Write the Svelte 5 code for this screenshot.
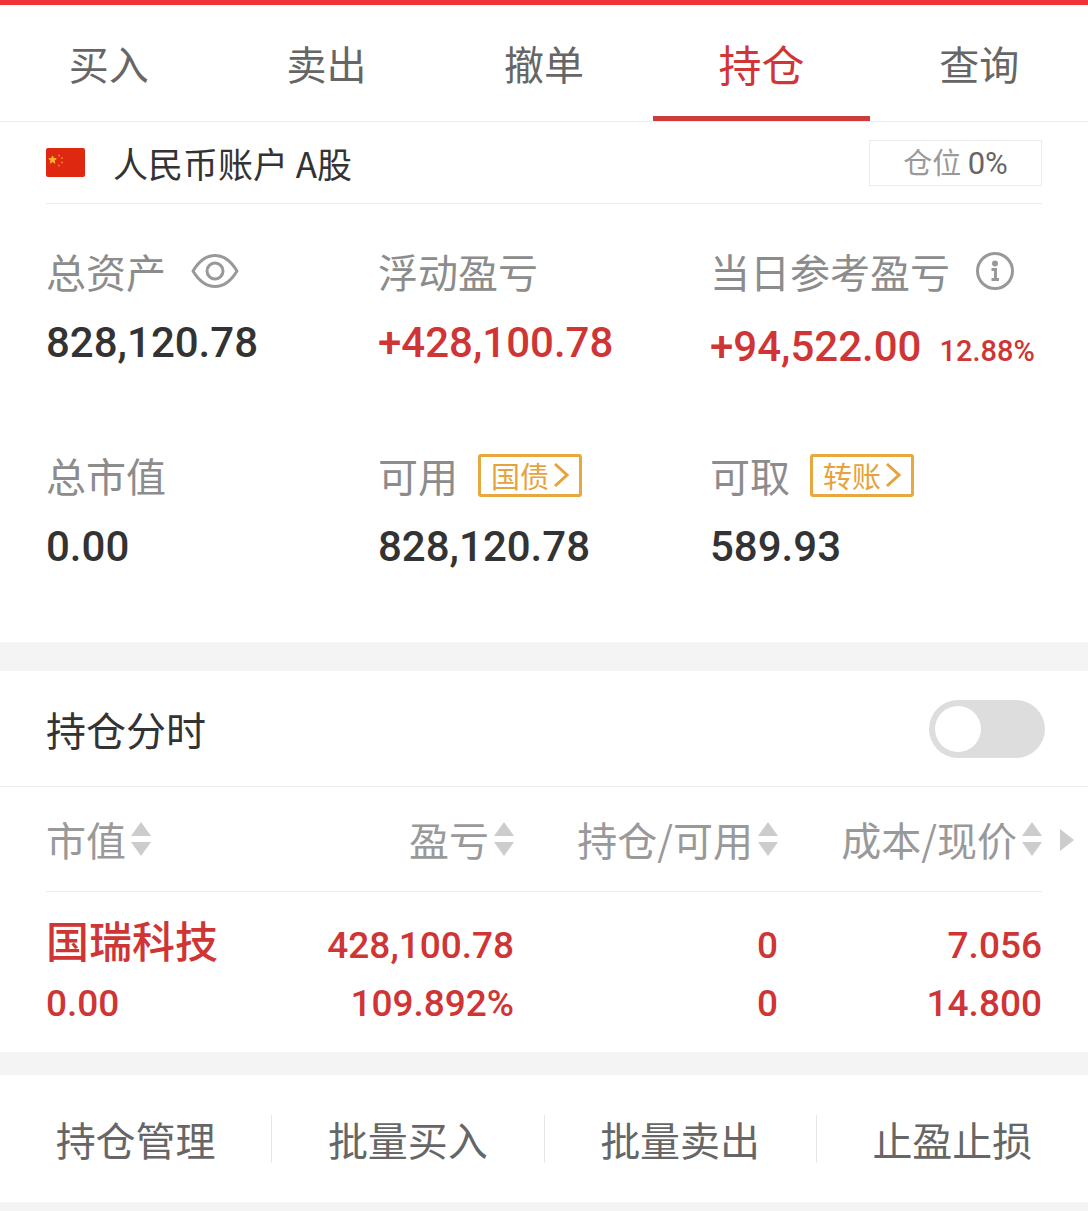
<script lang="ts">
  type Asset = {
    label: string;
    value: string;
    rate?: string;
    up?: boolean;
    icon?: "eye" | "info";
    link?: string;
  };

  const tabs = ["买入", "卖出", "撤单", "持仓", "查询"];
  const actions = ["持仓管理", "批量买入", "批量卖出", "止盈止损"];
  const columns = ["市值", "盈亏", "持仓/可用", "成本/现价"];

  const assets: Asset[] = [
    { label: "总资产", value: "828,120.78", icon: "eye" },
    { label: "浮动盈亏", value: "+428,100.78", up: true },
    {
      label: "当日参考盈亏",
      value: "+94,522.00",
      rate: "12.88%",
      up: true,
      icon: "info",
    },
    { label: "总市值", value: "0.00" },
    { label: "可用", value: "828,120.78", link: "国债" },
    { label: "可取", value: "589.93", link: "转账" },
  ];

  const holdings = [
    {
      name: "国瑞科技",
      marketValue: "0.00",
      cells: [
        ["428,100.78", "109.892%"],
        ["0", "0"],
        ["7.056", "14.800"],
      ],
    },
  ];

  let activeTab = $state("持仓");
  let showIntraday = $state(false);
</script>

<main>
  <nav class="tabs">
    {#each tabs as tab}
      <button
        class="tab"
        class:active={tab === activeTab}
        onclick={() => (activeTab = tab)}>{tab}</button
      >
    {/each}
  </nav>

  <section class="account">
    <header class="account-head">
      <svg class="flag" viewBox="0 0 39 29" aria-hidden="true">
        <rect width="39" height="29" rx="2" fill="#de2910" />
        <path
          d="M6.500 8l1 2.600 2.800.1-2.200 1.700.8 2.700-2.400-1.500-2.300 1.500.8-2.700-2.200-1.700 2.700-.1z"
          fill="#ffb52e"
          stroke="#ffb52e"
        />
        <g fill="#f4772b">
          <circle cx="13" cy="7.500" r="1.100" />
          <circle cx="16" cy="10" r="1.100" />
          <circle cx="16" cy="14.500" r="1.100" />
          <circle cx="13" cy="17.500" r="1.100" />
        </g>
      </svg>
      <span class="account-name">人民币账户 A股</span>
      <button class="position">仓位 <span>0%</span></button>
    </header>

    <div class="assets">
      {#each assets as asset}
        <div class="asset">
          <div class="asset-label">
            <span>{asset.label}</span>
            {#if asset.icon === "eye"}
              <button class="icon-button" aria-label="隐藏金额">
                <svg width="48" height="36" viewBox="0 0 48 36">
                  <g fill="none" stroke="#999" stroke-width="3">
                    <path
                      d="M2 18C8 8 15 2.500 24 2.500S40 8 46 18C40 28 33 33.500 24 33.500S8 28 2 18z"
                      stroke-linejoin="round"
                    />
                    <circle cx="24" cy="18" r="8" />
                  </g>
                </svg>
              </button>
            {:else if asset.icon === "info"}
              <button class="icon-button" aria-label="说明">
                <svg width="40" height="40" viewBox="0 0 40 40">
                  <circle
                    cx="20"
                    cy="20"
                    r="17.500"
                    fill="none"
                    stroke="#999"
                    stroke-width="3"
                  />
                  <circle cx="20" cy="12.500" r="3" fill="#999" />
                  <path
                    d="M16.500 18.500H20.500V28M16.500 28.500H24"
                    fill="none"
                    stroke="#999"
                    stroke-width="3"
                  />
                </svg>
              </button>
            {/if}
            {#if asset.link}
              <button class="badge">
                {asset.link}
                <svg width="16" height="26" viewBox="0 0 16 26">
                  <path
                    d="M2 2L14 13L2 24"
                    fill="none"
                    stroke="#e6a23c"
                    stroke-width="3"
                  />
                </svg>
              </button>
            {/if}
          </div>
          <div class="asset-value" class:up={asset.up} class:rated={asset.rate}>
            <span>{asset.value}</span>
            {#if asset.rate}
              <span class="rate">{asset.rate}</span>
            {/if}
          </div>
        </div>
      {/each}
    </div>
  </section>

  <section class="holdings">
    <div class="intraday">
      <label for="intraday">持仓分时</label>
      <input
        id="intraday"
        class="switch"
        type="checkbox"
        bind:checked={showIntraday}
      />
    </div>

    <div class="table-wrap">
      <table>
        <thead>
          <tr>
            {#each columns as column}
              <th>
                <button class="sort">
                  {column}
                  <svg width="20" height="34" viewBox="0 0 20 34">
                    <path d="M10 0L20 14H0zM0 20H20L10 34z" fill="#ccc" />
                  </svg>
                </button>
              </th>
            {/each}
          </tr>
        </thead>
        <tbody>
          {#each holdings as row}
            <tr>
              <td>
                <div>{row.name}</div>
                <div><span class="num">{row.marketValue}</span></div>
              </td>
              {#each row.cells as [top, bottom]}
                <td>
                  <div><span class="num">{top}</span></div>
                  <div><span class="num">{bottom}</span></div>
                </td>
              {/each}
            </tr>
          {/each}
        </tbody>
      </table>
      <button class="more" aria-label="更多列">
        <svg width="14" height="22" viewBox="0 0 14 22">
          <path d="M0 0L14 11L0 22z" fill="#ccc" />
        </svg>
      </button>
    </div>
  </section>

  <footer class="actions">
    {#each actions as action}
      <button>{action}</button>
    {/each}
  </footer>
</main>

<style>
  :global(body) {
    background: #f4f4f4;
  }

  main {
    border-top: 5px solid #f03137;
    color: #333;
    font-family: "Noto Sans CJK SC", sans-serif;
    font-size: 40px;
    line-height: 48px;
  }

  button {
    padding: 0;
    border: none;
    background: none;
    color: inherit;
    font: inherit;
    cursor: pointer;
  }

  svg {
    display: block;
    flex: none;
  }

  .tabs {
    display: flex;
    background: #fff;
    border-bottom: 1px solid #ececec;
  }

  .tab {
    flex: 1;
    height: 116px;
    border-top: 5px solid transparent;
    border-bottom: 5px solid transparent;
    color: #666;
  }

  .tab.active {
    border-bottom-color: #cf3a3a;
    color: #d13535;
    font-size: 43px;
  }

  .account {
    padding: 0 46px 71px;
    background: #fff;
  }

  .account-head {
    display: flex;
    align-items: center;
    height: 81px;
    border-bottom: 1px solid #ececec;
  }

  .flag {
    width: 39px;
    height: 29px;
  }

  .account-name {
    margin-left: 28px;
    font-size: 35px;
  }

  .position {
    width: 173px;
    height: 46px;
    margin-left: auto;
    padding-bottom: 4px;
    border: 1px solid #ececec;
    color: #999;
    font-size: 29px;
    line-height: 40px;
  }

  .position span {
    color: #666;
    font-family: Roboto, sans-serif;
    font-size: 31px;
    line-height: 1;
  }

  .assets {
    display: grid;
    grid-template-columns: repeat(3, 1fr);
    row-gap: 72px;
    padding-top: 43px;
  }

  .asset-label {
    display: flex;
    align-items: center;
    height: 48px;
    color: #8c8c8c;
  }

  .icon-button {
    margin-left: 25px;
  }

  .badge {
    display: flex;
    align-items: center;
    justify-content: center;
    gap: 4px;
    width: 104px;
    height: 43px;
    margin-left: 20px;
    border: 3px solid #e6a83f;
    border-radius: 3px;
    color: #e6a23c;
    font-size: 29px;
    line-height: 36px;
  }

  .asset-value {
    display: flex;
    align-items: baseline;
    gap: 18px;
    margin-top: 24px;
    font-family: Roboto, sans-serif;
    font-size: 42px;
    font-weight: 500;
    white-space: nowrap;
  }

  .asset-value.rated {
    line-height: 56px;
  }

  .up {
    color: #cf3535;
  }

  .rate {
    font-size: 29px;
  }

  .holdings {
    margin-top: 29px;
    background: #fff;
  }

  .intraday {
    display: flex;
    align-items: center;
    justify-content: space-between;
    height: 115px;
    padding: 0 43px 0 46px;
    border-bottom: 1px solid #ececec;
  }

  .switch {
    appearance: none;
    display: flex;
    width: 116px;
    height: 58px;
    margin: 0;
    padding: 6px;
    box-sizing: border-box;
    border-radius: 29px;
    background: #ddd;
    cursor: pointer;
  }

  .switch::before {
    content: "";
    width: 46px;
    height: 46px;
    border-radius: 50%;
    background: #fff;
  }

  .switch:checked {
    justify-content: flex-end;
    background: #cf3a3a;
  }

  .table-wrap {
    position: relative;
    padding: 0 46px 26px;
  }

  table {
    width: 100%;
    table-layout: fixed;
    border-collapse: separate;
    border-spacing: 0;
  }

  th {
    height: 104px;
    padding: 0;
    border-bottom: 1px solid #ececec;
    color: #999;
    font-weight: 400;
  }

  th:first-child {
    width: 20%;
  }

  th:nth-child(2) {
    width: 27%;
  }

  .sort {
    display: flex;
    align-items: center;
    gap: 5px;
    margin-left: auto;
    white-space: nowrap;
  }

  th:first-child .sort {
    margin-left: 0;
  }

  td {
    padding: 18px 0 0;
    color: #cf3535;
    font-size: 43px;
    font-weight: 500;
    line-height: 58px;
    text-align: right;
    white-space: nowrap;
  }

  td:first-child {
    text-align: left;
  }

  .num {
    font-family: Roboto, sans-serif;
    font-size: 37px;
    line-height: 1;
  }

  .more {
    position: absolute;
    top: 42px;
    right: 14px;
  }

  .actions {
    display: flex;
    align-items: center;
    height: 127px;
    margin-top: 23px;
    background: #fff;
    color: #666;
  }

  .actions button {
    flex: 1;
  }

  .actions button:not(:last-child) {
    border-right: 1px solid #e6e6e6;
  }
</style>
